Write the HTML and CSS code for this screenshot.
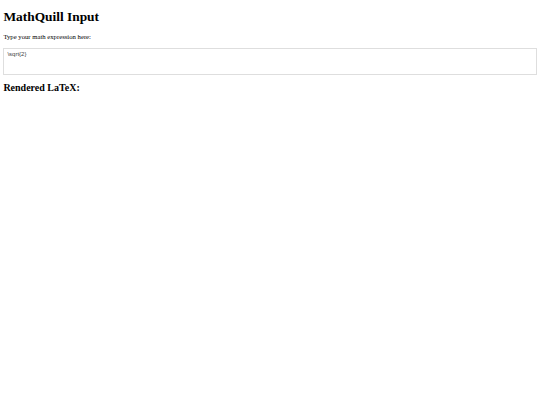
FILE: index.html
```html
<!DOCTYPE html>
<html lang="en">
<head>
    <meta charset="UTF-8">
    <meta name="viewport" content="width=device-width, initial-scale=1.0">
    <title>MathQuill Input</title>
    <link rel="stylesheet" href="styles.css">
</head>
<body>
    <h1>MathQuill Input</h1>
    <p>Type your math expression here:</p>
    <div id="math-field" class="math-field">\sqrt{2}</div>

    <h2>Rendered LaTeX:</h2>
    <div id="latex-output" class="latex-output"></div>
</body>
</html>
```

FILE: styles.css
```css
body {
    font-family: "Liberation Serif", "Times New Roman", serif;
    font-size: 6.7px;
    margin: 3.4px;
    color: #000;
    background: #fff;
}
h1 {
    font-size: 13.4px;
    margin: 6px 0 8px;
}
h2 {
    font-size: 10px;
    margin: 7.5px 0;
}
p {
    margin: 6.7px 0 7.6px;
}
.math-field {
    height: 21px;
    padding: 2px 3px;
    border: 1px solid #dedede;
    font-size: 6px;
    font-family: "Liberation Sans", Arial, sans-serif;
    color: #444;
}
```
